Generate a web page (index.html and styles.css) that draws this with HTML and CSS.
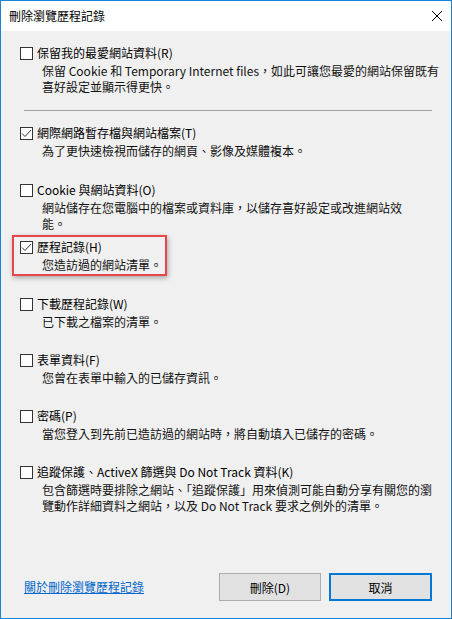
FILE: index.html
```html
<!DOCTYPE html>
<html lang="zh-Hant">
<head>
    <meta charset="UTF-8">
    <meta name="viewport" content="width=device-width, initial-scale=1.0">
    <title>刪除瀏覽歷程記錄</title>
    <link rel="stylesheet" href="styles.css">
</head>
<body>
    <div class="window">
        <div class="titlebar">
            <div class="title">刪除瀏覽歷程記錄</div>
            <svg class="close" width="12" height="12" viewBox="0 0 12 12">
                <path d="M1 1 L11 11 M11 1 L1 11" stroke="#000" stroke-width="1" fill="none"/>
            </svg>
        </div>

        <div class="content">
            <div class="item first">
                <div class="label-row">
                    <span class="checkbox"></span>
                    <span class="label">保留我的最愛網站資料(R)</span>
                </div>
                <div class="desc">保留 Cookie 和 Temporary Internet files，如此可讓您最愛的網站保留既有<br>喜好設定並顯示得更快。</div>
            </div>

            <div class="separator"></div>

            <div class="item">
                <div class="label-row">
                    <span class="checkbox checked"><svg width="11" height="11" viewBox="0 0 11 11"><path d="M1 5.5 L4 8.5 L10 2" stroke="#333" stroke-width="1" fill="none"/></svg></span>
                    <span class="label">網際網路暫存檔與網站檔案(T)</span>
                </div>
                <div class="desc">為了更快速檢視而儲存的網頁、影像及媒體複本。</div>
            </div>

            <div class="item">
                <div class="label-row">
                    <span class="checkbox"></span>
                    <span class="label">Cookie 與網站資料(O)</span>
                </div>
                <div class="desc">網站儲存在您電腦中的檔案或資料庫，以儲存喜好設定或改進網站效<br>能。</div>
            </div>

            <div class="item">
                <div class="highlight"></div>
                <div class="label-row">
                    <span class="checkbox checked"><svg width="11" height="11" viewBox="0 0 11 11"><path d="M1 5.5 L4 8.5 L10 2" stroke="#333" stroke-width="1" fill="none"/></svg></span>
                    <span class="label">歷程記錄(H)</span>
                </div>
                <div class="desc">您造訪過的網站清單。</div>
            </div>

            <div class="item short">
                <div class="label-row">
                    <span class="checkbox"></span>
                    <span class="label">下載歷程記錄(W)</span>
                </div>
                <div class="desc">已下載之檔案的清單。</div>
            </div>

            <div class="item short">
                <div class="label-row">
                    <span class="checkbox"></span>
                    <span class="label">表單資料(F)</span>
                </div>
                <div class="desc">您曾在表單中輸入的已儲存資訊。</div>
            </div>

            <div class="item short">
                <div class="label-row">
                    <span class="checkbox"></span>
                    <span class="label">密碼(P)</span>
                </div>
                <div class="desc">當您登入到先前已造訪過的網站時，將自動填入已儲存的密碼。</div>
            </div>

            <div class="item">
                <div class="label-row">
                    <span class="checkbox"></span>
                    <span class="label">追蹤保護、ActiveX 篩選與 Do Not Track 資料(K)</span>
                </div>
                <div class="desc">包含篩選時要排除之網站、「追蹤保護」用來偵測可能自動分享有關您的瀏<br>覽動作詳細資料之網站，以及 Do Not Track 要求之例外的清單。</div>
            </div>

            <div class="footer">
                <a href="#" class="help-link">關於刪除瀏覽歷程記錄</a>
                <div class="buttons">
                    <button class="btn">刪除(D)</button>
                    <button class="btn default">取消</button>
                </div>
            </div>
        </div>
    </div>
</body>
</html>
```

FILE: styles.css
```css
* {
    margin: 0;
    padding: 0;
    box-sizing: border-box;
    font-family: "Noto Sans CJK TC", "Noto Sans", sans-serif;
}

body {
    background-color: #fff;
    color: #000;
    font-size: 12px;
}

.window {
    width: 452px;
    height: 619px;
    border: 1px solid #1883d7;
    display: flex;
    flex-direction: column;
}

.titlebar {
    height: 30px;
    background-color: #fff;
    display: flex;
    align-items: center;
    justify-content: space-between;
    padding-left: 8px;
    padding-right: 8px;
}

.title {
    font-size: 12px;
    line-height: 16px;
}

.close {
    display: block;
}

.content {
    flex: 1;
    background-color: #f0f0f0;
    padding: 14px 19px 17px 18px;
    display: flex;
    flex-direction: column;
}

.item {
    position: relative;
    height: 57px;
}

.item.first {
    height: auto;
}

.item.short {
    height: 56px;
}

.label-row {
    display: flex;
    align-items: center;
    height: 16px;
    line-height: 16px;
}

.checkbox {
    width: 13px;
    height: 13px;
    border: 1px solid #333;
    background-color: #fff;
    margin-left: 1px;
    margin-right: 4px;
    display: flex;
    align-items: center;
    justify-content: center;
}

.label {
    white-space: nowrap;
}

.desc {
    margin-top: 2px;
    margin-left: 23px;
    line-height: 16px;
    white-space: nowrap;
    color: #111;
}

.separator {
    height: 1px;
    background-color: #a0a0a0;
    margin: 15px 0 14px 5px;
}

.highlight {
    position: absolute;
    left: -7px;
    top: -4px;
    width: 155px;
    height: 41px;
    border: 2px solid #e8464a;
    box-shadow: 1px 2px 5px rgba(0, 0, 0, 0.3);
}

.footer {
    margin-top: auto;
    display: flex;
    align-items: center;
    justify-content: space-between;
}

.help-link {
    margin-left: 5px;
    color: #0066cc;
    text-decoration: underline;
    line-height: 16px;
}

.buttons {
    display: flex;
    gap: 8px;
}

.btn {
    width: 102px;
    height: 28px;
    background-color: #e1e1e1;
    border: 1px solid #adadad;
    font-size: 12px;
    color: #000;
}

.btn.default {
    width: 103px;
    border: 2px solid #0078d7;
}
```
